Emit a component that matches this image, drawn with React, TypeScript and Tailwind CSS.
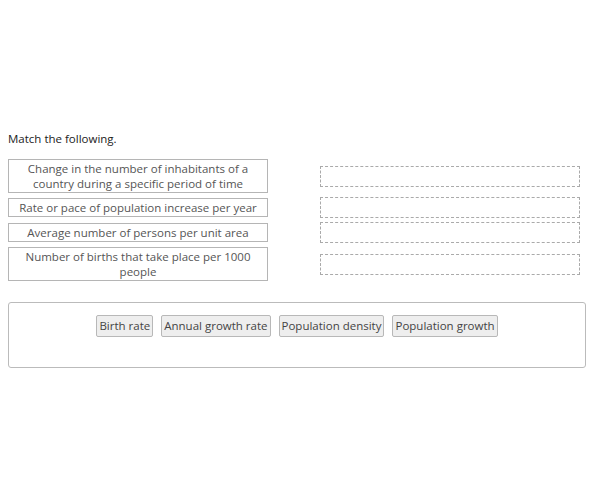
import React from 'react';

const prompts = [
  'Change in the number of inhabitants of a country during a specific period of time',
  'Rate or pace of population increase per year',
  'Average number of persons per unit area',
  'Number of births that take place per 1000 people',
];

const options = ['Birth rate', 'Annual growth rate', 'Population density', 'Population growth'];

const App: React.FC = () => {
  return (
    <div
      className="w-[600px] h-[500px] bg-white pt-[131px] px-[8px] text-[11.5px] leading-[16px]"
      style={{ fontFamily: '"Open Sans", "Liberation Sans", sans-serif' }}
    >
      <p className="text-[#222]">Match the following.</p>

      <div className="mt-[12px] flex flex-col gap-[4px] w-[572px]">
        {prompts.map((text) => (
          <div key={text} className="flex items-center justify-between">
            <div className="w-[260px] border border-[#b5b5b5] py-px px-1 text-center leading-[15px] text-[#555]">
              {text}
            </div>
            <div className="w-[260px] h-[21px] border border-dashed border-[#aaa]" />
          </div>
        ))}
      </div>

      <div className="mt-[21px] w-[578px] h-[66px] border border-[#bbb] rounded-[3px] pt-[12px] flex justify-center items-start gap-[8px]">
        {options.map((o) => (
          <span
            key={o}
            className="h-[22px] px-[2px] flex items-center bg-[#eee] border border-[#b8b8b8] rounded-[2px] text-[#444]"
          >
            {o}
          </span>
        ))}
      </div>
    </div>
  );
};

export default App;
